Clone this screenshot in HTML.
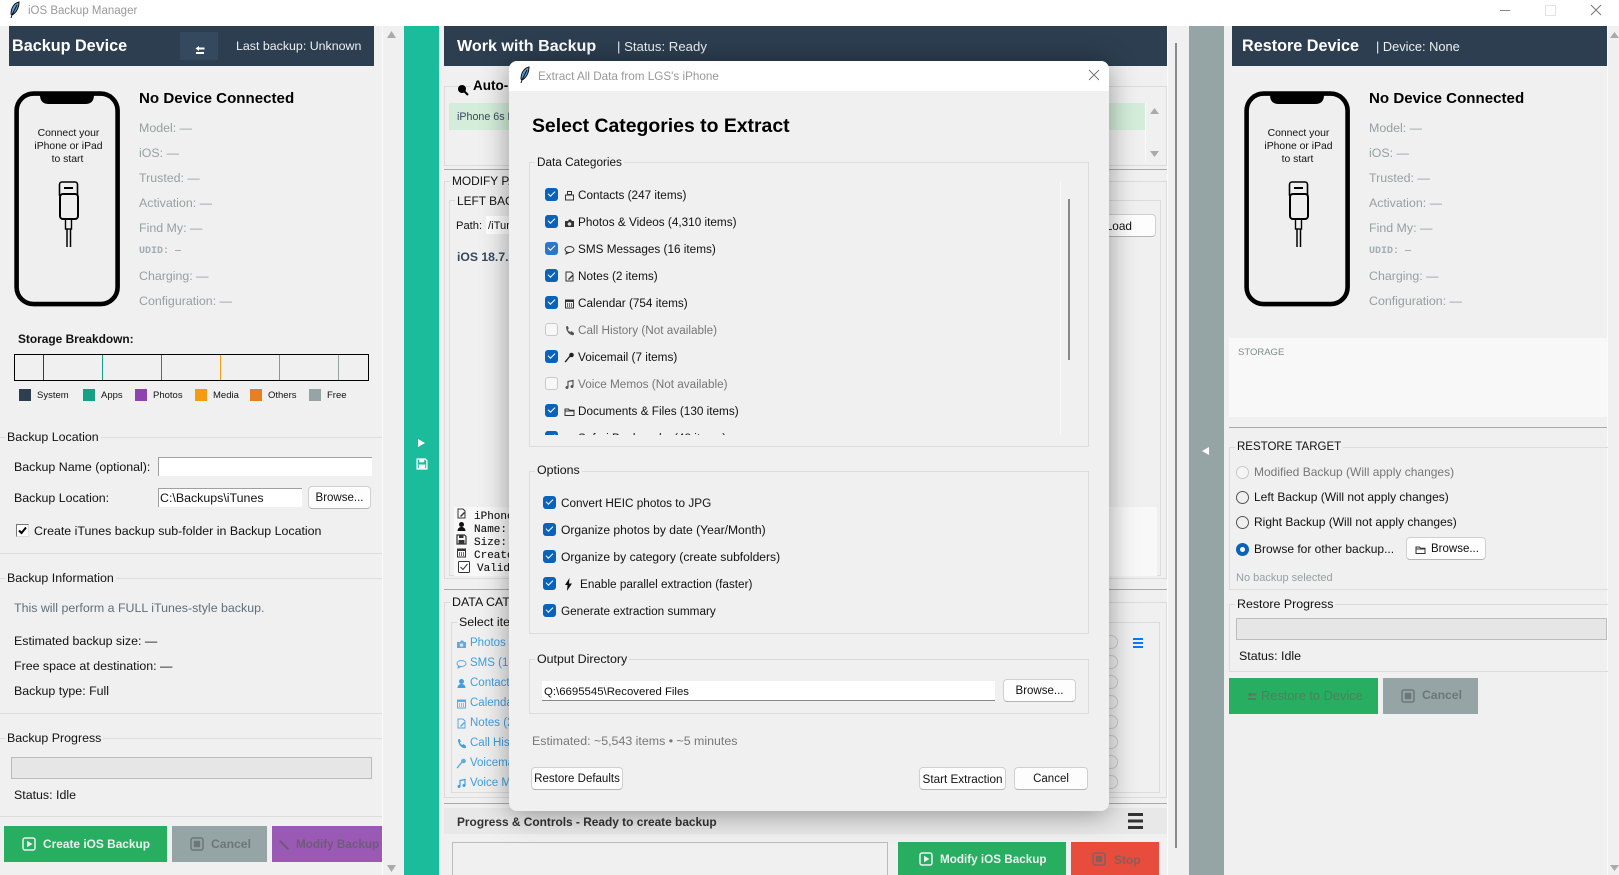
<!DOCTYPE html>
<html lang="en"><head><meta charset="utf-8"><title>iOS Backup Manager</title>
<style>
html,body{margin:0;padding:0;width:1619px;height:875px;overflow:hidden;background:#f0f0f0}
body{position:relative;font-family:"Liberation Sans",sans-serif;font-size:12.4px;color:#111}
.b,.t,svg.a{position:absolute}
.t{white-space:nowrap;line-height:16px;height:16px;margin-top:-8px}
.f{position:absolute;border:1px solid #dcdcdc;box-sizing:border-box}
.lb{background:#f0f0f0;padding:0 2px}
.gr{color:#95a0a3}
.bt{position:absolute;box-sizing:border-box;background:#fdfdfd;border:1px solid #d0d0d0;border-bottom-color:#b5b5b5;border-radius:4px;text-align:center;line-height:23px;font-size:11.500px}
.c{position:absolute;width:13px;height:13px;background:#0a62bb;border-radius:3px;margin-top:-7px}
.c:after{content:"";position:absolute;left:3px;top:3px;width:6px;height:3px;border-left:1px solid #fff;border-bottom:1px solid #fff;transform:rotate(-45deg)}
.c.o{background:#f7f7f7;border:1px solid #c8c8c8;box-sizing:border-box}.c.o:after{display:none}
.r{position:absolute;width:13px;height:13px;box-sizing:border-box;border:1.300px solid #555;border-radius:50%;margin-top:-6.500px}
.m{font-family:"Liberation Mono",monospace;font-size:11px;-webkit-text-stroke:.1px #111}
.bb{font-weight:bold}
.ic{position:absolute;width:11px;height:11px;margin-top:-5px}
.bl{color:#3f9fe0;font-size:11.500px}
.ra{position:absolute;left:1104px;width:14px;height:14px;box-sizing:border-box;border:1.500px solid #ccc;border-radius:50%;margin-top:-7px}
.s{font-size:11.750px;margin-top:-7px}
.u{font-family:"Liberation Mono",monospace;font-size:10px;color:#a0aeb5;font-weight:bold}
.ph{font-size:10.400px;text-align:center;width:107px}
</style></head><body>
<svg width="0" height="0" style="position:absolute"><defs>
<symbol id="ph" viewBox="0 0 107 216"><rect x="2.600" y="2.600" width="101" height="210.500" rx="17" fill="#efefef" stroke="#000" stroke-width="4.600"/><path d="M26 1h54v3q0 9-9 9H35q-9 0-9-9z" fill="#000"/><path d="M48 91h13a2.500 2.500 0 0 1 2.500 2.500V104h-18V93.500A2.500 2.500 0 0 1 48 91z" fill="none" stroke="#000" stroke-width="1.600"/><rect x="50" y="96" width="9" height="2" fill="#000"/><rect x="46" y="103" width="18" height="25" rx="3" fill="#efefef" stroke="#000" stroke-width="2"/><rect x="51.500" y="128" width="6" height="10" fill="none" stroke="#000" stroke-width="1.400"/><path d="M53 138v18M56.500 138v18" stroke="#000" stroke-width="1.500"/></symbol>
<symbol id="fe" viewBox="0 0 12 18"><path d="M10 1C5 2 2 7 2 13l1 1C7 12 10 7 10 1z" fill="#5b9bd5" stroke="#111" stroke-width="1"/><path d="M8 4 3 14 2 17" stroke="#111" stroke-width="1" fill="none"/></symbol>
<symbol id="cont" viewBox="0 0 11 11"><path d="M3.500 1.500h4v3h-4zM1.500 5h8v5h-8z" fill="none" stroke="currentColor"/></symbol>
<symbol id="pho" viewBox="0 0 11 11"><path d="M1 4h3l1-1.500h2L8 4h2v6H1z" fill="currentColor"/><circle cx="5.500" cy="7" r="1.800" fill="#ddd"/></symbol>
<symbol id="sms" viewBox="0 0 11 11"><ellipse cx="5.500" cy="5.500" rx="4.500" ry="3" fill="none" stroke="currentColor"/><path d="M2.500 8 2 10l3-1.500" fill="none" stroke="currentColor"/></symbol>
<symbol id="note" viewBox="0 0 11 11"><path d="M2 1h5l2 2v7H2z" fill="none" stroke="currentColor"/><path d="M4 8l4-4 1 1-4 4z" fill="currentColor"/></symbol>
<symbol id="cal" viewBox="0 0 11 11"><rect x="1.500" y="2" width="8" height="8" fill="none" stroke="currentColor"/><rect x="1.500" y="2" width="8" height="2" fill="currentColor"/><path d="M3.500 5v4M5.500 5v4M7.500 5v4" stroke="currentColor" stroke-width=".7"/></symbol>
<symbol id="call" viewBox="0 0 11 11"><path d="M2 1.500 3.800 1l1 2.500-1 1c.5 1 1.200 2 2.500 2.500l1.200-1L10 8v1.500l-1 .8C5 10 2 6 2 1.500z" fill="currentColor"/></symbol>
<symbol id="mic" viewBox="0 0 11 11"><path d="M6 4 2 9l-1 1" stroke="currentColor" stroke-width="1.400" fill="none"/><circle cx="7.500" cy="3" r="2.300" fill="currentColor"/></symbol>
<symbol id="mus" viewBox="0 0 11 11"><path d="M4 8V2.500l5-1V7" fill="none" stroke="currentColor" stroke-width="1.200"/><circle cx="3" cy="8.500" r="1.500" fill="currentColor"/><circle cx="8" cy="7.500" r="1.500" fill="currentColor"/></symbol>
<symbol id="fol" viewBox="0 0 11 11"><path d="M1 9.500V3h3.500l1 1.200H10v5.300zM1 5h9" fill="none" stroke="currentColor"/></symbol>
<symbol id="per" viewBox="0 0 11 11"><circle cx="5.500" cy="3.500" r="2.500" fill="currentColor"/><path d="M1.500 10q0-3 3-4h2q3 1 3 4z" fill="currentColor"/></symbol>
<symbol id="sav" viewBox="0 0 11 11"><path d="M1 1h7.500L10 2.500V10H1z" fill="none" stroke="currentColor" stroke-width="1.200"/><rect x="3" y="1.500" width="4.500" height="2.500" fill="currentColor"/><rect x="2.500" y="6" width="6" height="3.500" fill="currentColor"/></symbol>
<symbol id="play" viewBox="0 0 14 14"><rect x="1" y="1" width="12" height="12" rx="2" fill="none" stroke="currentColor" stroke-width="1.500"/><path d="M5 3.800v6.400L10.500 7z" fill="currentColor"/></symbol>
<symbol id="stop" viewBox="0 0 14 14"><rect x="1" y="1" width="12" height="12" rx="2" fill="none" stroke="currentColor" stroke-width="1.500"/><rect x="3.800" y="3.800" width="6.400" height="6.400" fill="currentColor"/></symbol>
<symbol id="back" viewBox="0 0 10 10"><path d="M4 1 0.500 3.500 4 6V4.500h5.500v-2H4zM1 7h8v2H1z" fill="currentColor"/></symbol>
<symbol id="wre" viewBox="0 0 12 12"><path d="M1 2.500 3 1l2 2.500 6 6L9.500 11 4 5.500z" fill="currentColor"/></symbol>
</defs></svg>

<!-- title bar -->
<div class="b" style="left:0;top:0;width:1619px;height:26px;background:#fff"></div>
<svg class="a" style="left:9px;top:1px" width="12" height="18"><use href="#fe"/></svg>
<div class="t" style="left:28px;top:11px;color:#999;font-size:11.500px">iOS Backup Manager</div>
<div class="b" style="left:1500px;top:10px;width:10px;height:1px;background:#888"></div>
<div class="b" style="left:1545px;top:5px;width:9px;height:9px;border:1px solid #e2e2e2"></div>
<svg class="a" style="left:1590px;top:4px" width="12" height="12"><path d="M1 1l10 10M11 1 1 11" stroke="#777" fill="none"/></svg>

<!-- left panel -->
<div class="b" style="left:9px;top:26px;width:365px;height:40px;background:#2c3e50"></div>
<div class="t bb" style="left:12px;top:46px;color:#fff;font-size:16.200px">Backup Device</div>
<div class="b" style="left:180px;top:32px;width:38px;height:28px;background:#34495e"></div>
<svg class="a" style="left:195px;top:45px;color:#fff" width="10" height="10"><use href="#back"/></svg>
<div class="t" style="left:236px;top:46px;color:#ecf0f1;font-size:12.400px">Last backup: Unknown</div>
<div class="b" style="left:382px;top:26px;width:1px;height:849px;background:#fafafa"></div>
<svg class="a" style="left:387px;top:31px" width="9" height="7"><path d="M4.500 0 9 7H0z" fill="#aaa"/></svg>
<svg class="a" style="left:387px;top:865px" width="9" height="7"><path d="M0 0h9L4.500 7z" fill="#aaa"/></svg>

<svg class="a" style="left:14px;top:91px" width="107" height="216"><use href="#ph"/></svg>
<div class="t ph" style="left:15px;top:133.500px">Connect your</div>
<div class="t ph" style="left:15px;top:146.500px">iPhone or iPad</div>
<div class="t ph" style="left:14px;top:159.500px">to start</div>
<div class="t bb" style="left:139px;top:99px;font-size:15.100px;color:#000">No Device Connected</div>
<div class="t gr" style="left:139px;top:128px">Model: —</div>
<div class="t gr" style="left:139px;top:153px">iOS: —</div>
<div class="t gr" style="left:139px;top:178px">Trusted: —</div>
<div class="t gr" style="left:139px;top:203px">Activation: —</div>
<div class="t gr" style="left:139px;top:228px">Find My: —</div>
<div class="t u" style="left:139px;top:252px">UDID: —</div>
<div class="t gr" style="left:139px;top:276px">Charging: —</div>
<div class="t gr" style="left:139px;top:301px">Configuration: —</div>

<div class="t bb" style="left:18px;top:339px;font-size:11.900px;color:#111">Storage Breakdown:</div>
<div class="b" style="left:14px;top:354px;width:353px;height:25px;border:1px solid #000"></div>
<div class="b" style="left:43px;top:355px;width:1px;height:25px;background:#2c3e50"></div>
<div class="b" style="left:102px;top:355px;width:1px;height:25px;background:#16a085"></div>
<div class="b" style="left:161px;top:355px;width:1px;height:25px;background:#8e44ad"></div>
<div class="b" style="left:220px;top:355px;width:1px;height:25px;background:#f39c12"></div>
<div class="b" style="left:279px;top:355px;width:1px;height:25px;background:#e67e22"></div>
<div class="b" style="left:338px;top:355px;width:1px;height:25px;background:#95a5a6"></div>
<div class="b" style="left:19px;top:389px;width:12px;height:12px;background:#2c3e50"></div><div class="t" style="left:37px;top:396px;font-size:9.500px">System</div>
<div class="b" style="left:83px;top:389px;width:12px;height:12px;background:#16a085"></div><div class="t" style="left:101px;top:396px;font-size:9.500px">Apps</div>
<div class="b" style="left:135px;top:389px;width:12px;height:12px;background:#8e44ad"></div><div class="t" style="left:153px;top:396px;font-size:9.500px">Photos</div>
<div class="b" style="left:195px;top:389px;width:12px;height:12px;background:#f39c12"></div><div class="t" style="left:213px;top:396px;font-size:9.500px">Media</div>
<div class="b" style="left:250px;top:389px;width:12px;height:12px;background:#e67e22"></div><div class="t" style="left:268px;top:396px;font-size:9.500px">Others</div>
<div class="b" style="left:309px;top:389px;width:12px;height:12px;background:#95a5a6"></div><div class="t" style="left:327px;top:396px;font-size:9.500px">Free</div>

<div class="b" style="left:0;top:437px;width:382px;height:1px;background:#dcdcdc"></div>
<div class="t lb" style="left:5px;top:437px">Backup Location</div>
<div class="t" style="left:14px;top:467px">Backup Name (optional):</div>
<div class="b" style="left:158px;top:457px;width:213px;height:18px;background:#fff;border-left:1px solid #a0a0a0;border-top:1px solid #a0a0a0"></div>
<div class="t" style="left:14px;top:498px">Backup Location:</div>
<div class="b" style="left:158px;top:488px;width:143px;height:18px;background:#fff;border-left:1px solid #a0a0a0;border-top:1px solid #a0a0a0"></div>
<div class="t" style="left:160px;top:498px">C:\Backups\iTunes</div>
<div class="bt" style="left:308px;top:486px;width:63px;height:23px">Browse...</div>
<div class="b" style="left:16px;top:524px;width:11px;height:11px;background:#fff;border-left:1px solid #777;border-top:1px solid #777;border-right:1px solid #ddd;border-bottom:1px solid #ddd"></div>
<svg class="a" style="left:17px;top:525px" width="11" height="11"><path d="M2 5.500 4.500 8 9 2.500" stroke="#000" stroke-width="2" fill="none"/></svg>
<div class="t" style="left:34px;top:531px">Create iTunes backup sub-folder in Backup Location</div>

<div class="b" style="left:0;top:553px;width:382px;height:1px;background:#dcdcdc"></div>
<div class="b" style="left:0;top:578px;width:382px;height:1px;background:#dcdcdc"></div>
<div class="t lb" style="left:5px;top:578px">Backup Information</div>
<div class="t" style="left:14px;top:608px;color:#5f6f7c">This will perform a FULL iTunes-style backup.</div>
<div class="t" style="left:14px;top:641px">Estimated backup size: —</div>
<div class="t" style="left:14px;top:666px">Free space at destination: —</div>
<div class="t" style="left:14px;top:691px">Backup type: Full</div>
<div class="b" style="left:0;top:713px;width:382px;height:1px;background:#dcdcdc"></div>
<div class="b" style="left:0;top:738px;width:382px;height:1px;background:#dcdcdc"></div>
<div class="t lb" style="left:5px;top:738px">Backup Progress</div>
<div class="b" style="left:11px;top:757px;width:359px;height:20px;background:#e6e6e6;border:1px solid #bcbcbc"></div>
<div class="t" style="left:14px;top:795px">Status: Idle</div>
<div class="b" style="left:0;top:816px;width:382px;height:1px;background:#dcdcdc"></div>
<div class="b" style="left:4px;top:826px;width:163px;height:36px;background:#27ae60"></div>
<svg class="a" style="left:22px;top:837px;color:#ecf0f1" width="14" height="14"><use href="#play"/></svg>
<div class="t bb" style="left:43px;top:844px;color:#ecf0f1;font-size:11.900px">Create iOS Backup</div>
<div class="b" style="left:172px;top:826px;width:95px;height:36px;background:#95a5a6"></div>
<svg class="a" style="left:190px;top:837px;color:#6d7778" width="14" height="14"><use href="#stop"/></svg>
<div class="t bb" style="left:211px;top:844px;color:#6d7778;font-size:12.200px">Cancel</div>
<div class="b" style="left:272px;top:826px;width:110px;height:36px;background:#9b59b6;overflow:hidden"></div>
<svg class="a" style="left:278px;top:839px;color:#6f5a7a" width="12" height="12"><use href="#wre"/></svg>
<div class="t bb" style="left:296px;top:845px;color:#6f5a7a;font-size:11.700px">Modify Backup</div>

<!-- teal bar -->
<div class="b" style="left:404px;top:26px;width:35px;height:849px;background:#1abc9c"></div>
<svg class="a" style="left:418px;top:439px" width="7" height="8"><path d="M0 0 7 4 0 8z" fill="#fff"/></svg>
<svg class="a" style="left:416px;top:458px;color:#fff" width="12" height="12"><use href="#sav"/></svg>

<!-- center panel -->
<div class="b" style="left:444px;top:26px;width:723px;height:40px;background:#2c3e50"></div>
<div class="t bb" style="left:457px;top:46px;color:#fff;font-size:16.100px">Work with Backup</div>
<div class="t" style="left:617px;top:47px;color:#ecf0f1;font-size:13.200px">| Status: Ready</div>
<div class="f" style="left:444px;top:86px;width:723px;height:80px"></div>
<svg class="a" style="left:457px;top:84px" width="12" height="12"><circle cx="5" cy="5" r="4" fill="#000"/><path d="M7 7l4 4" stroke="#000" stroke-width="2"/></svg>
<div class="t bb lb" style="left:471px;top:86px;font-size:13.500px;color:#000">Auto-Detect</div>
<div class="b" style="left:449px;top:103px;width:696px;height:27px;background:#d4edda"></div>
<div class="t" style="left:457px;top:117px;font-size:10.700px;color:#34495e">iPhone 6s Plus</div>
<div class="b" style="left:1145px;top:103px;width:1px;height:59px;background:#fafafa"></div>
<svg class="a" style="left:1150px;top:108px" width="9" height="6"><path d="M4.500 0 9 6H0z" fill="#aaa"/></svg>
<svg class="a" style="left:1150px;top:151px" width="9" height="6"><path d="M0 0h9L4.500 6z" fill="#aaa"/></svg>
<div class="b" style="left:444px;top:169px;width:723px;height:1px;background:#aaa"></div>
<div class="f" style="left:444px;top:181px;width:723px;height:398px"></div>
<div class="t lb" style="left:450px;top:181px;font-size:11.900px">MODIFY PANEL</div>
<div class="f" style="left:449px;top:200px;width:712px;height:376px"></div>
<div class="t lb" style="left:455px;top:201px;font-size:11.900px">LEFT BACKUP</div>
<div class="t" style="left:456px;top:226px;font-size:11.200px">Path:</div>
<div class="b" style="left:486px;top:216px;width:120px;height:18px;background:#fff"></div>
<div class="t" style="left:488px;top:226px;font-size:11.200px">/iTunes</div>
<div class="bt" style="left:1080px;top:214px;width:76px;height:23px;text-align:right;padding-right:23px;font-size:11.800px">Load</div>
<div class="t bb" style="left:457px;top:257px;font-size:12.200px;color:#34495e">iOS 18.7.2</div>
<div class="b" style="left:454px;top:507px;width:703px;height:69px;background:#f8f8f8"></div>
<svg class="ic" style="left:456px;top:513px;color:#333"><use href="#note"/></svg><div class="t m" style="left:474px;top:517px">iPhone</div>
<svg class="ic" style="left:456px;top:526px;color:#111"><use href="#per"/></svg><div class="t m" style="left:474px;top:530px">Name:</div>
<svg class="ic" style="left:456px;top:539px;color:#333"><use href="#sav"/></svg><div class="t m" style="left:474px;top:543px">Size:</div>
<svg class="ic" style="left:456px;top:552px;color:#333"><use href="#cal"/></svg><div class="t m" style="left:474px;top:556px">Created</div>
<svg class="a" style="left:458px;top:561px" width="12" height="12"><rect x=".5" y=".5" width="11" height="11" rx="1" fill="#fff" stroke="#333"/><path d="M2.500 6 5 8.500 9.500 3" stroke="#333" fill="none"/></svg><div class="t m" style="left:477px;top:569px">Valid</div>
<div class="b" style="left:444px;top:589px;width:723px;height:1px;background:#aaa"></div>
<div class="f" style="left:444px;top:602px;width:723px;height:196px"></div>
<div class="t lb" style="left:450px;top:602px">DATA CATEGORIES</div>
<div class="f" style="left:451px;top:622px;width:709px;height:171px"></div>
<div class="t lb" style="left:457px;top:622px">Select items</div>
<svg class="ic" style="left:456px;top:643px;color:#5da9e0"><use href="#pho"/></svg><div class="t bl" style="left:470px;top:643px">Photos &amp; Videos</div>
<svg class="ic" style="left:456px;top:663px;color:#5da9e0"><use href="#sms"/></svg><div class="t bl" style="left:470px;top:663px">SMS (1,234)</div>
<svg class="ic" style="left:456px;top:683px;color:#3f9fe0"><use href="#per"/></svg><div class="t bl" style="left:470px;top:683px">Contacts</div>
<svg class="ic" style="left:456px;top:703px;color:#5da9e0"><use href="#cal"/></svg><div class="t bl" style="left:470px;top:703px">Calendar</div>
<svg class="ic" style="left:456px;top:723px;color:#5da9e0"><use href="#note"/></svg><div class="t bl" style="left:470px;top:723px">Notes (2)</div>
<svg class="ic" style="left:456px;top:743px;color:#3f9fe0"><use href="#call"/></svg><div class="t bl" style="left:470px;top:743px">Call History</div>
<svg class="ic" style="left:456px;top:763px;color:#5da9e0"><use href="#mic"/></svg><div class="t bl" style="left:470px;top:763px">Voicemail</div>
<svg class="ic" style="left:456px;top:783px;color:#3f9fe0"><use href="#mus"/></svg><div class="t bl" style="left:470px;top:783px">Voice Memos</div>
<div class="ra" style="top:642px"></div><div class="ra" style="top:662px"></div><div class="ra" style="top:682px"></div><div class="ra" style="top:702px"></div><div class="ra" style="top:722px"></div><div class="ra" style="top:742px"></div><div class="ra" style="top:762px"></div><div class="ra" style="top:782px"></div>
<svg class="a" style="left:1133px;top:638px" width="10" height="10"><path d="M0 0h10v2H0zM0 4h10v2H0zM0 8h10v2H0z" fill="#007bff"/></svg>
<div class="b" style="left:444px;top:803px;width:723px;height:1px;background:#aaa"></div>
<div class="b" style="left:444px;top:808px;width:723px;height:26px;background:#e8e8e8"></div>
<div class="t bb" style="left:457px;top:822px;color:#333;font-size:11.900px">Progress &amp; Controls - Ready to create backup</div>
<svg class="a" style="left:1128px;top:813px" width="15" height="16"><path d="M0 0h15v3H0zM0 6.500h15v3H0zM0 13h15v3H0z" fill="#333"/></svg>
<div class="b" style="left:452px;top:842px;width:436px;height:34px;background:#f0f0f0;border:1px solid #bbb;box-sizing:border-box"></div>
<div class="b" style="left:898px;top:842px;width:168px;height:33px;background:#27ae60"></div>
<svg class="a" style="left:919px;top:852px;color:#ecf0f1" width="14" height="14"><use href="#play"/></svg>
<div class="t bb" style="left:940px;top:860px;color:#ecf0f1;font-size:11.700px">Modify iOS Backup</div>
<div class="b" style="left:1071px;top:842px;width:88px;height:33px;background:#e74c3c"></div>
<svg class="a" style="left:1092px;top:852px;color:#85605b" width="14" height="14"><use href="#stop"/></svg>
<div class="t bb" style="left:1114px;top:860px;color:#85605b;font-size:12px">Stop</div>
<div class="b" style="left:1167px;top:26px;width:1px;height:849px;background:#fafafa"></div>
<div class="b" style="left:1175px;top:43px;width:2px;height:805px;background:#8a8a8a"></div>

<!-- grey bar -->
<div class="b" style="left:1189px;top:26px;width:35px;height:849px;background:#95a5a6"></div>
<svg class="a" style="left:1202px;top:447px" width="7" height="8"><path d="M7 0v8L0 4z" fill="#fff"/></svg>

<!-- right panel -->
<div class="b" style="left:1232px;top:26px;width:375px;height:40px;background:#2c3e50"></div>
<div class="t bb" style="left:1242px;top:46px;color:#fff;font-size:16.200px">Restore Device</div>
<div class="t" style="left:1376px;top:47px;color:#ecf0f1;font-size:12.800px">| Device: None</div>
<div class="b" style="left:1607px;top:26px;width:1px;height:849px;background:#fafafa"></div>
<svg class="a" style="left:1610px;top:32px" width="9" height="6"><path d="M4.500 0 9 6H0z" fill="#aaa"/></svg>
<svg class="a" style="left:1610px;top:865px" width="9" height="6"><path d="M0 0h9L4.500 6z" fill="#aaa"/></svg>
<svg class="a" style="left:1244px;top:91px" width="107" height="216"><use href="#ph"/></svg>
<div class="t ph" style="left:1245px;top:133.500px">Connect your</div>
<div class="t ph" style="left:1245px;top:146.500px">iPhone or iPad</div>
<div class="t ph" style="left:1244px;top:159.500px">to start</div>
<div class="t bb" style="left:1369px;top:99px;font-size:15.100px;color:#000">No Device Connected</div>
<div class="t gr" style="left:1369px;top:128px">Model: —</div>
<div class="t gr" style="left:1369px;top:153px">iOS: —</div>
<div class="t gr" style="left:1369px;top:178px">Trusted: —</div>
<div class="t gr" style="left:1369px;top:203px">Activation: —</div>
<div class="t gr" style="left:1369px;top:228px">Find My: —</div>
<div class="t u" style="left:1369px;top:252px">UDID: —</div>
<div class="t gr" style="left:1369px;top:276px">Charging: —</div>
<div class="t gr" style="left:1369px;top:301px">Configuration: —</div>
<div class="b" style="left:1229px;top:338px;width:378px;height:79px;background:#f8f8f8"></div>
<div class="t" style="left:1238px;top:353px;font-size:9.500px;color:#7f8c8d">STORAGE</div>
<div class="b" style="left:1229px;top:427px;width:378px;height:1px;background:#aaa"></div>
<div class="f" style="left:1229px;top:447px;width:379px;height:143px;border-right:0"></div>
<div class="t lb" style="left:1235px;top:447px;font-size:11.500px">RESTORE TARGET</div>
<div class="r" style="left:1236px;top:472px;border-color:#c8c8c8;background:#f5f5f5"></div><div class="t" style="left:1254px;top:472px;color:#777;font-size:12px">Modified Backup (Will apply changes)</div>
<div class="r" style="left:1236px;top:497px"></div><div class="t" style="left:1254px;top:497px;font-size:12px">Left Backup (Will not apply changes)</div>
<div class="r" style="left:1236px;top:522px"></div><div class="t" style="left:1254px;top:522px;font-size:12px">Right Backup (Will not apply changes)</div>
<div class="r" style="left:1236px;top:549px;border:4px solid #0a62bb;background:#fff"></div><div class="t" style="left:1254px;top:549px;font-size:12px">Browse for other backup...</div>
<div class="bt" style="left:1406px;top:537px;width:80px;height:23px;text-align:left;padding-left:24px">Browse...</div>
<svg class="ic" style="left:1415px;top:549px;color:#333"><use href="#fol"/></svg>
<div class="t" style="left:1236px;top:577.500px;color:#95a0a3;font-size:11px">No backup selected</div>
<div class="f" style="left:1229px;top:604px;width:379px;height:68px;border-right:0"></div>
<div class="t lb" style="left:1235px;top:604px">Restore Progress</div>
<div class="b" style="left:1236px;top:618px;width:369px;height:20px;background:#e6e6e6;border:1px solid #bcbcbc"></div>
<div class="t" style="left:1239px;top:656px">Status: Idle</div>
<div class="b" style="left:1229px;top:678px;width:149px;height:36px;background:#27ae60"></div>
<svg class="a" style="left:1247px;top:691px;color:#4e8060" width="10" height="10"><use href="#back"/></svg>
<div class="t" style="left:1261px;top:696px;color:#4e8060;font-size:12.800px">Restore to Device</div>
<div class="b" style="left:1383px;top:678px;width:95px;height:36px;background:#95a5a6"></div>
<svg class="a" style="left:1401px;top:689px;color:#6d7778" width="14" height="14"><use href="#stop"/></svg>
<div class="t bb" style="left:1422px;top:695px;color:#6d7778;font-size:12.200px">Cancel</div>

<!-- modal -->
<div class="b" style="left:509px;top:61px;width:600px;height:750px;background:#f0f0f0;border-radius:8px;box-shadow:0 3px 28px rgba(0,0,0,.38);overflow:hidden">
<div class="b" style="left:0;top:0;width:600px;height:30px;background:#fff"></div></div>
<svg class="a" style="left:519px;top:66px" width="12" height="18"><use href="#fe"/></svg>
<div class="t s" style="left:538px;top:76px;color:#999;font-size:11.700px">Extract All Data from LGS's iPhone</div>
<svg class="a" style="left:1088px;top:69px" width="12" height="12"><path d="M1 1l10 10M11 1 1 11" stroke="#777" fill="none"/></svg>
<div class="t bb" style="left:532px;top:126px;font-size:19.400px;color:#000">Select Categories to Extract</div>

<div class="f" style="left:529px;top:162px;width:560px;height:285px"></div>
<div class="t lb s" style="left:535px;top:162px">Data Categories</div>
<div class="b" style="left:1060px;top:181px;width:1px;height:254px;background:#fafafa"></div>
<div class="b" style="left:1068px;top:199px;width:2px;height:161px;background:#888"></div>
<div class="c" style="left:545px;top:195px"></div><svg class="ic" style="left:564px;top:195px;color:#333"><use href="#cont"/></svg><div class="t s" style="left:578px;top:195px">Contacts (247 items)</div>
<div class="c" style="left:545px;top:222px"></div><svg class="ic" style="left:564px;top:222px;color:#333"><use href="#pho"/></svg><div class="t s" style="left:578px;top:222px">Photos &amp; Videos (4,310 items)</div>
<div class="c" style="left:545px;top:249px;background:#2a78c8"></div><svg class="ic" style="left:564px;top:249px;color:#333"><use href="#sms"/></svg><div class="t s" style="left:578px;top:249px">SMS Messages (16 items)</div>
<div class="c" style="left:545px;top:276px"></div><svg class="ic" style="left:564px;top:276px;color:#333"><use href="#note"/></svg><div class="t s" style="left:578px;top:276px">Notes (2 items)</div>
<div class="c" style="left:545px;top:303px"></div><svg class="ic" style="left:564px;top:303px;color:#333"><use href="#cal"/></svg><div class="t s" style="left:578px;top:303px">Calendar (754 items)</div>
<div class="c o" style="left:545px;top:330px"></div><svg class="ic" style="left:564px;top:330px;color:#555"><use href="#call"/></svg><div class="t s" style="left:578px;top:330px;color:#777">Call History (Not available)</div>
<div class="c" style="left:545px;top:357px"></div><svg class="ic" style="left:564px;top:357px;color:#222"><use href="#mic"/></svg><div class="t s" style="left:578px;top:357px">Voicemail (7 items)</div>
<div class="c o" style="left:545px;top:384px"></div><svg class="ic" style="left:564px;top:384px;color:#555"><use href="#mus"/></svg><div class="t s" style="left:578px;top:384px;color:#777">Voice Memos (Not available)</div>
<div class="c" style="left:545px;top:411px"></div><svg class="ic" style="left:564px;top:411px;color:#333"><use href="#fol"/></svg><div class="t s" style="left:578px;top:411px">Documents &amp; Files (130 items)</div>
<div class="b" style="left:530px;top:431px;width:525px;height:4px;overflow:hidden"><div class="c" style="left:15px;top:7px"></div><div class="t s" style="left:48px;top:7px">Safari Bookmarks (48 items)</div></div>

<div class="f" style="left:529px;top:471px;width:560px;height:163px"></div>
<div class="t lb" style="left:535px;top:470px">Options</div>
<div class="c" style="left:543px;top:503px"></div><div class="t s" style="left:561px;top:503px">Convert HEIC photos to JPG</div>
<div class="c" style="left:543px;top:530px"></div><div class="t" style="left:561px;top:530px;font-size:12.100px">Organize photos by date (Year/Month)</div>
<div class="c" style="left:543px;top:557px"></div><div class="t" style="left:561px;top:557px;font-size:12.100px">Organize by category (create subfolders)</div>
<div class="c" style="left:543px;top:584px"></div><svg class="a" style="left:565px;top:578px" width="7" height="13"><path d="M4.500 0 0 7h2.500L2 13 7 5.500H4z" fill="#111"/></svg><div class="t s" style="left:580px;top:584px">Enable parallel extraction (faster)</div>
<div class="c" style="left:543px;top:611px"></div><div class="t s" style="left:561px;top:611px">Generate extraction summary</div>

<div class="f" style="left:529px;top:659px;width:560px;height:55px"></div>
<div class="t lb" style="left:535px;top:659px">Output Directory</div>
<div class="b" style="left:542px;top:681px;width:453px;height:19px;background:#fff;border-bottom:1px solid #888"></div>
<div class="t" style="left:544px;top:692px;font-size:11.400px">Q:\6695545\Recovered Files</div>
<div class="bt" style="left:1003px;top:679px;width:73px;height:23px">Browse...</div>
<div class="t" style="left:532px;top:741px;color:#777">Estimated: ~5,543 items • ~5 minutes</div>
<div class="bt" style="left:531px;top:767px;width:92px;height:23px">Restore Defaults</div>
<div class="bt" style="left:919px;top:767px;width:87px;height:23px;font-size:11.700px">Start Extraction</div>
<div class="bt" style="left:1014px;top:767px;width:74px;height:23px">Cancel</div>
</body></html>
